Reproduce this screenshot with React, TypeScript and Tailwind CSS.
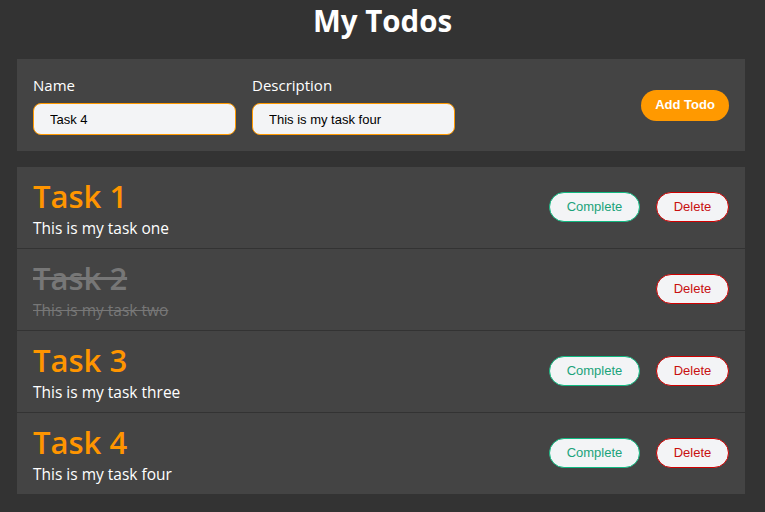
import React, { useState } from 'react';

interface Todo {
    id: number;
    name: string;
    description: string;
    completed: boolean;
}

const initialTodos: Todo[] = [
    { id: 1, name: 'Task 1', description: 'This is my task one', completed: false },
    { id: 2, name: 'Task 2', description: 'This is my task two', completed: true },
    { id: 3, name: 'Task 3', description: 'This is my task three', completed: false },
    { id: 4, name: 'Task 4', description: 'This is my task four', completed: false },
];

const TodoRow: React.FC<{ todo: Todo }> = ({ todo }) => (
    <div className="flex items-center h-[82px] last:h-[81px] px-4 border-b border-[#333] last:border-b-0">
        <div className="flex flex-col">
            <h2
                className={`text-[31px] leading-[36px] font-semibold ${todo.completed ? 'text-[#777] line-through' : 'text-[#ff9500]'}`}
            >
                {todo.name}
            </h2>
            <p className={`text-[15.5px] leading-[20px] mt-[4px] ${todo.completed ? 'text-[#777] line-through' : 'text-white'}`}>
                {todo.description}
            </p>
        </div>
        <div className="ml-auto flex items-center gap-4 mt-[-2px] font-['Liberation_Sans',sans-serif] text-[13px]">
            {!todo.completed && (
                <button className="h-[30px] w-[91px] rounded-full border border-[#10b981] bg-[#f3f4f6] text-[#1aa37a]">
                    Complete
                </button>
            )}
            <button className="h-[30px] w-[73px] rounded-full border border-[#d00000] bg-[#f3f4f6] text-[#c81010]">
                Delete
            </button>
        </div>
    </div>
);

export default function App() {
    const [name, setName] = useState('Task 4');
    const [description, setDescription] = useState('This is my task four');

    return (
        <div className="min-h-[512px] bg-[#333333] font-['Open_Sans',sans-serif] pl-[17px] pr-[20px] pb-4">
            <h1 className="text-center text-white text-[29.5px] leading-[42px] font-bold pl-[3px]">My Todos</h1>

            {/* Form */}
            <div className="mt-[17px] bg-[#444444] h-[92px] px-4 flex items-center">
                <div className="flex gap-4">
                    <label className="flex flex-col">
                        <span className="text-white text-[15px] leading-5 mb-[8px]">Name</span>
                        <input
                            value={name}
                            onChange={e => setName(e.target.value)}
                            className="w-[203px] h-[32px] rounded-lg border border-[#ff9900] bg-[#f3f4f6] px-4 text-[13px] text-black font-['Liberation_Sans',sans-serif] outline-none"
                        />
                    </label>
                    <label className="flex flex-col">
                        <span className="text-white text-[15px] leading-5 mb-[8px]">Description</span>
                        <input
                            value={description}
                            onChange={e => setDescription(e.target.value)}
                            className="w-[203px] h-[32px] rounded-lg border border-[#ff9900] bg-[#f3f4f6] px-4 text-[13px] text-black font-['Liberation_Sans',sans-serif] outline-none"
                        />
                    </label>
                </div>
                <button className="ml-auto h-[31px] w-[88px] rounded-full bg-[#ff9900] text-white text-[13px] font-bold font-['Liberation_Sans',sans-serif]">
                    Add Todo
                </button>
            </div>

            {/* List */}
            <div className="mt-4 bg-[#444444]">
                {initialTodos.map(todo => (
                    <TodoRow key={todo.id} todo={todo} />
                ))}
            </div>
        </div>
    );
}
